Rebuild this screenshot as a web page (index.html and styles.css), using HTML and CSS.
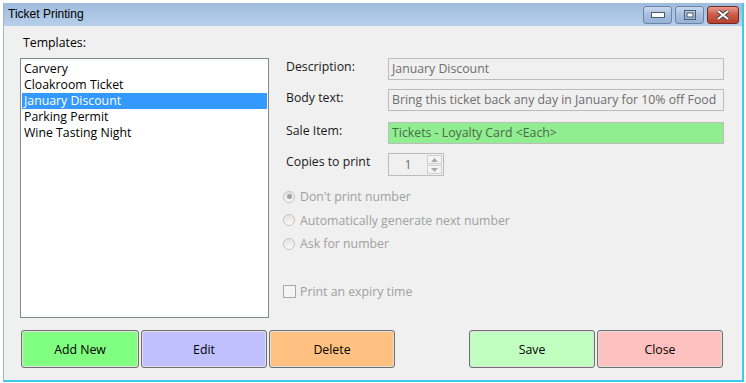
FILE: index.html
```html
<!DOCTYPE html>
<html lang="en">
<head>
  <meta charset="UTF-8" />
  <title>Ticket Printing</title>
  <link rel="stylesheet" href="styles.css">
</head>
<body>
  <div class="window">
    <div class="titlebar">
      <span class="title">Ticket Printing</span>
      <div class="caption-btns">
        <div class="cap-btn">
          <svg width="14" height="6" viewBox="0 0 14 6"><rect x="0.5" y="0.5" width="13" height="5" fill="#fff" stroke="#4a5a70"/></svg>
        </div>
        <div class="cap-btn">
          <svg width="12" height="10" viewBox="0 0 12 10"><rect x="0.5" y="0.5" width="11" height="9" fill="none" stroke="#4a5a70"/><rect x="3" y="3" width="6" height="4" fill="#fff" stroke="#4a5a70"/></svg>
        </div>
        <div class="cap-btn close">
          <svg width="14" height="10" viewBox="0 0 14 10"><path d="M2 1 L12 9 M12 1 L2 9" stroke="#444" stroke-width="4"/><path d="M2 1 L12 9 M12 1 L2 9" stroke="#fff" stroke-width="2"/></svg>
        </div>
      </div>
    </div>

    <div class="content">
      <div class="main">
        <div class="left">
          <div class="lbl">Templates:</div>
          <ul class="listbox">
            <li>Carvery</li>
            <li>Cloakroom Ticket</li>
            <li class="selected">January Discount</li>
            <li>Parking Permit</li>
            <li>Wine Tasting Night</li>
          </ul>
        </div>

        <div class="right">
          <div class="row">
            <label>Description:</label>
            <div class="field">January Discount</div>
          </div>
          <div class="row">
            <label>Body text:</label>
            <div class="field">Bring this ticket back any day in January for 10% off Food</div>
          </div>
          <div class="row">
            <label>Sale Item:</label>
            <div class="field green">Tickets - Loyalty Card &lt;Each&gt;</div>
          </div>
          <div class="row">
            <label>Copies to print</label>
            <div class="spin">
              <span class="spin-val">1</span>
              <div class="spin-arrows">
                <div class="arr">
                  <svg width="7" height="4" viewBox="0 0 7 4"><path d="M0 4 L3.5 0 L7 4 Z" fill="#a8a8a8"/></svg>
                </div>
                <div class="arr">
                  <svg width="7" height="4" viewBox="0 0 7 4"><path d="M0 0 L3.5 4 L7 0 Z" fill="#a8a8a8"/></svg>
                </div>
              </div>
            </div>
          </div>

          <div class="options">
            <div class="opt"><span class="radio checked"></span>Don't print number</div>
            <div class="opt"><span class="radio"></span>Automatically generate next number</div>
            <div class="opt"><span class="radio"></span>Ask for number</div>
          </div>

          <div class="opt expiry"><span class="check"></span>Print an expiry time</div>
        </div>
      </div>

      <div class="buttons">
        <div class="group">
          <button class="btn add">Add New</button>
          <button class="btn edit">Edit</button>
          <button class="btn del">Delete</button>
        </div>
        <div class="group">
          <button class="btn save">Save</button>
          <button class="btn close-btn">Close</button>
        </div>
      </div>
    </div>
  </div>
</body>
</html>
```

FILE: styles.css
```css
* {
  box-sizing: border-box;
}

body {
  margin: 0;
  background: #fff;
  font-family: "Open Sans", sans-serif;
  font-size: 12px;
  color: #000;
  width: 746px;
  height: 383px;
  overflow: hidden;
}

.window {
  margin: 3px 0 0 3px;
  width: 741px;
  height: 379px;
  border-left: 1px solid #a3b4c8;
  border-right: 2px solid #3ccbe8;
  border-bottom: 2px solid #3ccbe8;
  background: #f0f0f0;
  display: flex;
  flex-direction: column;
}

.titlebar {
  height: 23px;
  background: linear-gradient(#9fbbdd, #b7cfea);
  display: flex;
  align-items: center;
  justify-content: space-between;
  padding: 0 3px 0 4px;
}

.title {
  font-family: "Liberation Sans", sans-serif;
  font-size: 12px;
  color: #000;
  margin-top: -1px;
}

.caption-btns {
  display: flex;
  gap: 3px;
  align-items: center;
}

.cap-btn {
  width: 29px;
  height: 18px;
  border: 1px solid #6d86a8;
  border-radius: 3px;
  background: linear-gradient(#c8d9ee, #a7bfde 50%, #98b3d7);
  display: flex;
  align-items: center;
  justify-content: center;
}

.cap-btn.close {
  width: 32px;
  border-color: #6e2b25;
  background: linear-gradient(#e59a8d, #cc5a46 50%, #b9402c);
}

.content {
  flex: 1;
  display: flex;
  flex-direction: column;
  padding: 10px 19px 0 16px;
  font-size: 12.3px;
}

.main {
  display: flex;
  gap: 17px;
}

.left {
  width: 249px;
  flex-shrink: 0;
}

.lbl {
  height: 22px;
  padding-left: 3px;
  line-height: 14px;
}

.listbox {
  list-style: none;
  margin: 0;
  padding: 2px 1px;
  height: 260px;
  background: #fff;
  border: 1px solid #828790;
}

.listbox li {
  height: 16px;
  line-height: 16px;
  padding-left: 2px;
  white-space: nowrap;
}

.listbox li.selected {
  background: #3399ff;
  color: #fff;
}

.right {
  flex: 1;
  display: flex;
  flex-direction: column;
  padding-top: 22px;
}

.row {
  display: flex;
  align-items: flex-start;
  margin-bottom: 9px;
}

.row:nth-child(2) {
  margin-bottom: 11px;
}

.row label {
  width: 102px;
  flex-shrink: 0;
  line-height: 16px;
  padding-top: 1px;
  color: #1a1a1a;
}

.field {
  width: 336px;
  height: 22px;
  line-height: 20px;
  border: 1px solid #bcbcbc;
  padding-left: 3px;
  color: #6d6d6d;
  white-space: nowrap;
  overflow: hidden;
}

.field.green {
  background: #90ee90;
  color: #4a6a4a;
}

.spin {
  width: 56px;
  height: 23px;
  border: 1px solid #bcbcbc;
  display: flex;
}

.spin-val {
  flex: 1;
  text-align: center;
  line-height: 21px;
  color: #6d6d6d;
}

.spin-arrows {
  width: 16px;
  display: flex;
  flex-direction: column;
  gap: 1px;
  padding: 1px 1px 1px 0;
}

.arr {
  flex: 1;
  border: 1px solid #d0d0d0;
  background: #f4f4f4;
  display: flex;
  align-items: center;
  justify-content: center;
}

.options {
  margin-top: 3px;
  display: flex;
  flex-direction: column;
  gap: 6.5px;
}

.opt {
  display: flex;
  align-items: center;
  height: 17px;
  color: #a0a0a0;
  margin-left: -3px;
}

.radio {
  width: 12px;
  height: 12px;
  border: 1px solid #c4c4c4;
  border-radius: 50%;
  background: linear-gradient(#e4e4e4, #f8f8f8);
  margin-right: 5px;
  position: relative;
}

.radio.checked::after {
  content: "";
  position: absolute;
  left: 2.5px;
  top: 2.5px;
  width: 5px;
  height: 5px;
  border-radius: 50%;
  background: #a0a0a0;
}

.check {
  width: 13px;
  height: 13px;
  border: 1px solid #a8a8a8;
  background: #f4f4f4;
  margin-right: 4px;
}

.expiry {
  margin-top: 31px;
}

.buttons {
  margin-top: 12px;
  display: flex;
  justify-content: space-between;
  padding-left: 1px;
}

.group {
  display: flex;
  gap: 2px;
}

.btn {
  width: 126px;
  height: 38px;
  border: 1px solid #707070;
  border-radius: 3px;
  box-shadow: inset 0 0 0 1px #e0e0e0;
  font-family: "Open Sans", sans-serif;
  font-size: 12.3px;
  color: #000;
  padding: 0;
}

.btn.add { width: 118px; background: #80ff80; }
.btn.edit { background: #c0c0ff; }
.btn.del { background: #ffc080; }
.btn.save { background: #c0ffc0; }
.btn.close-btn { background: #ffc0c0; }
```
